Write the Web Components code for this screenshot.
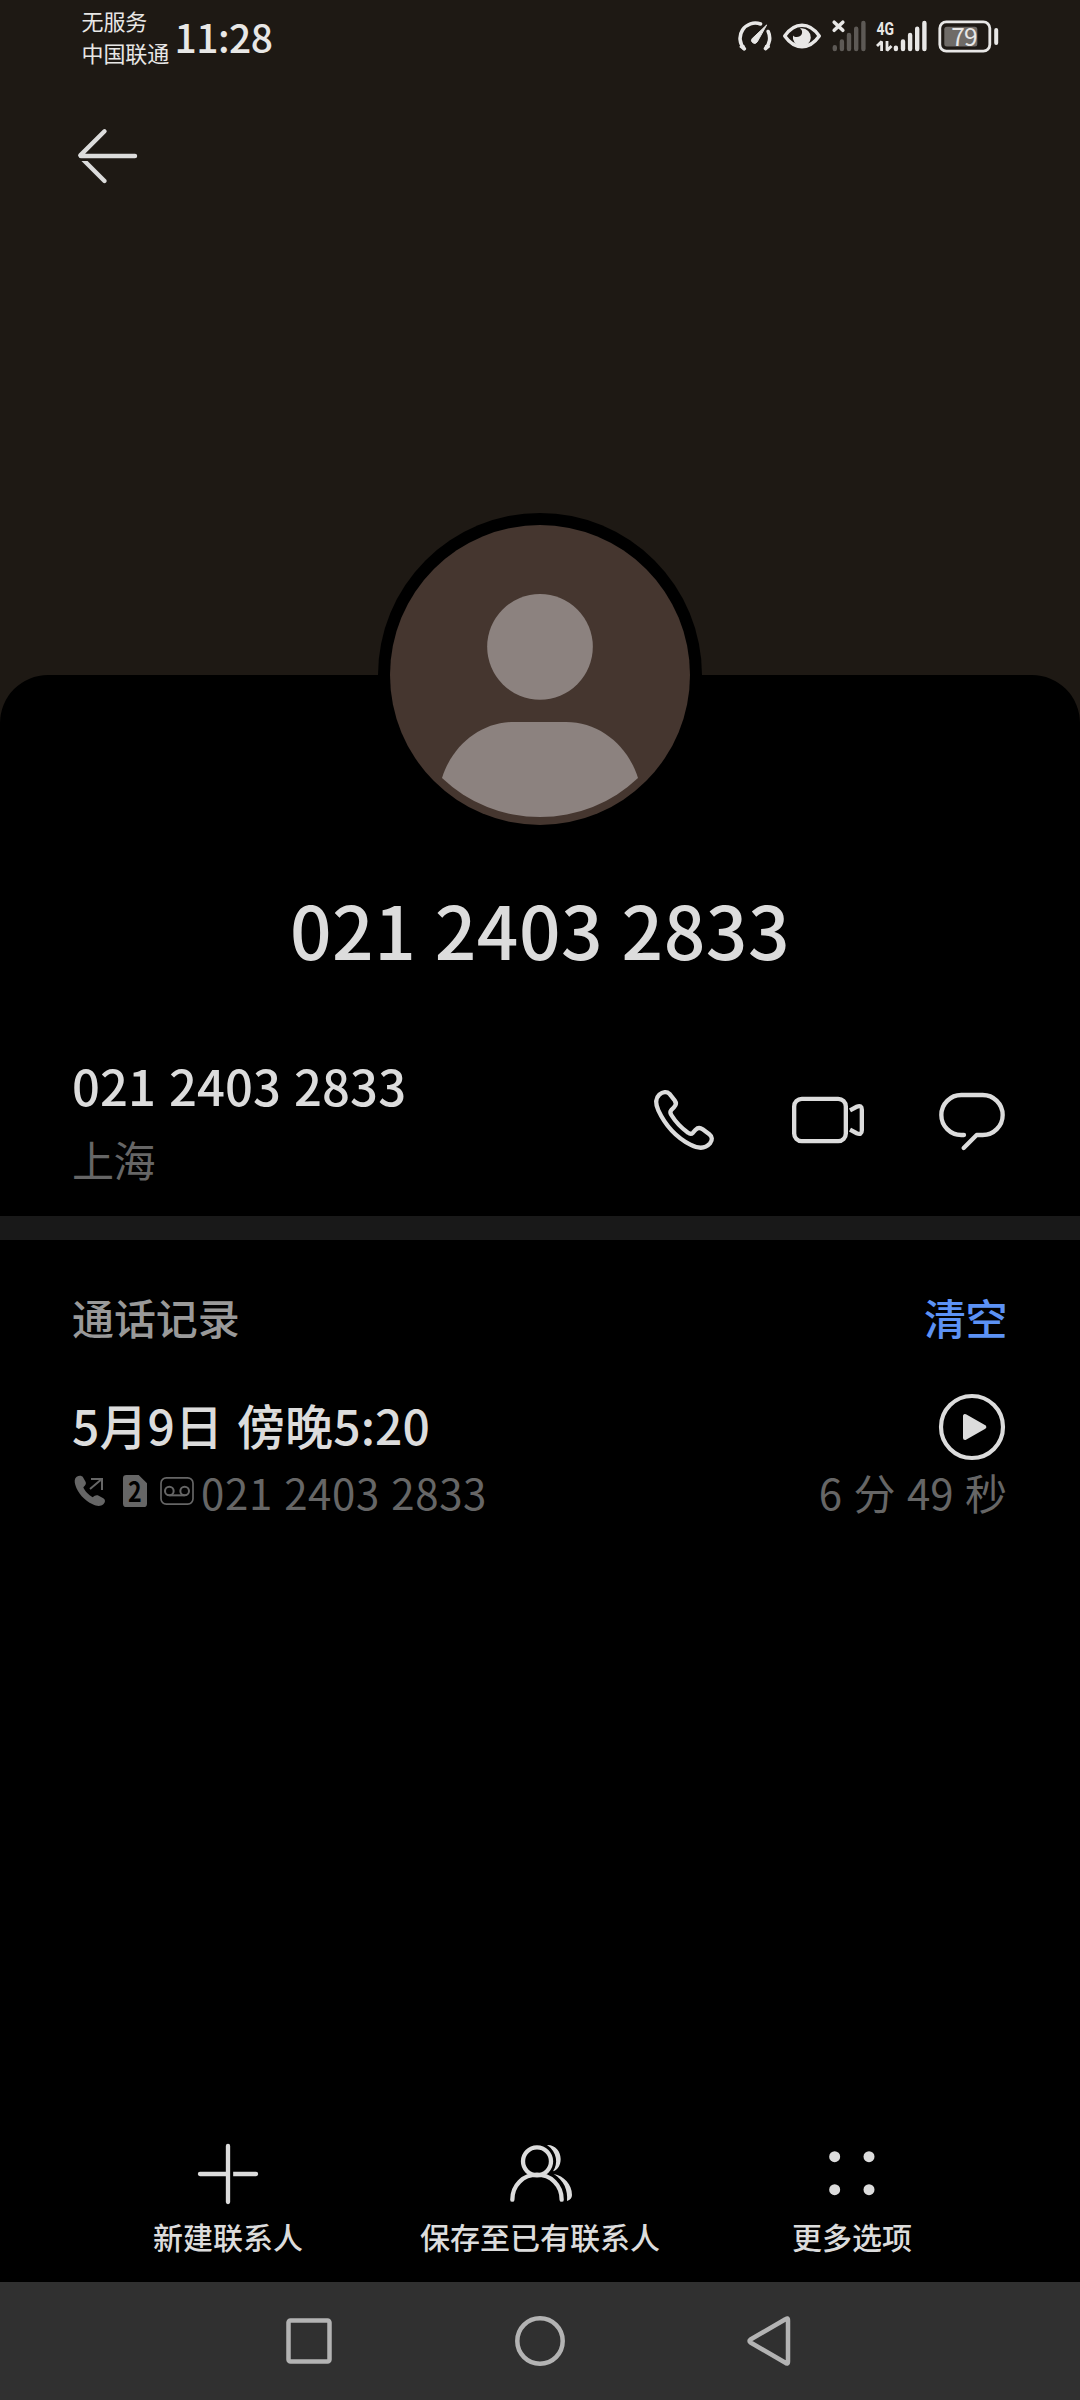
<!DOCTYPE html>
<html lang="zh-CN">
<head>
<meta charset="UTF-8">
<title>联系人</title>
<style>
    body {
        margin: 0;
        background: #000;
        color: #dcdcdc;
        font-family: "Noto Sans CJK SC", sans-serif;
    }
</style>
</head>
<body>
<phone-screen>
    <status-bar slot="status" time="11:28"></status-bar>
    <contact-avatar></contact-avatar>
    <contact-name>021 2403 2833</contact-name>
    <number-row>021 2403 2833<span slot="place">上海</span></number-row>
    <call-log>
        <span slot="title">通话记录</span>
        <span slot="clear">清空</span>
        <call-item duration="6 分 49 秒" number="021 2403 2833">5月9日 傍晚5:20</call-item>
    </call-log>
    <tool-bar slot="tools">
        <tool-button icon="add">新建联系人</tool-button>
        <tool-button icon="people">保存至已有联系人</tool-button>
        <tool-button icon="more">更多选项</tool-button>
    </tool-bar>
    <nav-bar slot="nav"></nav-bar>
</phone-screen>

<script>
class BaseElement extends HTMLElement {
    constructor() {
        super();
        this.attachShadow({ mode: 'open' });
    }

    connectedCallback() {
        this.shadowRoot.innerHTML = this.template();
    }
}

class PhoneScreen extends BaseElement {
    template() {
        return `
            <style>
                :host {
                    display: flex;
                    flex-direction: column;
                    width: 1080px;
                    height: 2400px;
                    overflow: hidden;
                    background: #1e1914;
                }
                header {
                    box-sizing: border-box;
                    height: 603px;
                    padding: 54px 0 0 72px;
                }
                header svg { display: block; }
                main {
                    flex: 1;
                    display: flex;
                    flex-direction: column;
                    background: #000;
                    border-radius: 48px 48px 0 0;
                }
                .space { flex: 1; }
            </style>
            <slot name="status"></slot>
            <header>
                <svg width="72" height="60" viewBox="72 126 72 60" fill="none" stroke="#dcdcdc" stroke-width="4.4" stroke-linecap="round" stroke-linejoin="round">
                    <path d="M104.5 181 L81 157.5"/>
                    <path d="M76 156H104" stroke="#1e1914" stroke-width="10" stroke-linecap="butt"/>
                    <path d="M104.5 131.3L80.3 155.4M80.8 156H135"/>
                </svg>
            </header>
            <main>
                <slot></slot>
                <div class="space"></div>
                <slot name="tools"></slot>
            </main>
            <slot name="nav"></slot>
        `;
    }
}

class StatusBar extends BaseElement {
    template() {
        return `
            <style>
                :host {
                    display: flex;
                    height: 72px;
                    color: #e8e7e6;
                }
                .carrier {
                    width: 93px;
                    padding: 5px 0 0 81.5px;
                    font-size: 22px;
                    line-height: 31.5px;
                    letter-spacing: -0.1px;
                    white-space: nowrap;
                }
                .time {
                    flex: 1;
                    padding-top: 6px;
                    font-size: 39px;
                    font-weight: 500;
                    line-height: 60px;
                    letter-spacing: -0.5px;
                }
                svg { display: block; margin-right: 72px; }
            </style>
            <div class="carrier">无服务<br>中国联通</div>
            <div class="time">${this.getAttribute('time')}</div>
            <svg width="276" height="72" viewBox="732 0 276 72" fill="none" stroke="#e8e7e6" stroke-linecap="round" stroke-linejoin="round">
                <!-- speed gauge -->
                <path d="M744.3 48.8A15.2 15.2 0 0 1 760.5 24M768.2 31.5A15.2 15.2 0 0 1 765.5 48.5" stroke-width="3.6"/>
                <path d="M740.5 46.8L743.6 49.3V46M769 46.8L765.9 49.3V46" stroke-width="2"/>
                <path d="M766.4 25.2L752.2 38.6A3 3 0 0 0 757 42.2Z" fill="#e8e7e6" stroke-width="1"/>
                <!-- eye comfort -->
                <path d="M784.7 36C790 28.5 796 25.3 802 25.3S814 28.5 819.3 36C814 43.5 808 46.7 802 46.7S790 43.5 784.7 36Z" stroke-width="3.4"/>
                <path d="M801.5 28.3A9 9 0 1 1 793 35.5C795 38 800.5 37.5 801.8 34C802.6 31.5 802 29.5 799.8 28.4Z" fill="#e8e7e6" stroke="none"/>
                <!-- sim 1, no service -->
                <path d="M834.2 22.2L842.8 30.3M842.8 22.2L834.2 30.3" stroke-width="3.6"/>
                <path d="M834.8 47.3V49M841.9 41.5V49M849 35V49M856.2 28.8V49M863.4 23V49" stroke="#5d5955" stroke-width="4.4"/>
                <!-- sim 2 -->
                <text x="876.5" y="34.6" font-family="Roboto" font-size="18.5" font-weight="700" textLength="17.5" lengthAdjust="spacingAndGlyphs" fill="#e8e7e6" stroke="none">4G</text>
                <path d="M877 46L881.6 41.5V51M887 41V50.5L891.5 46" stroke-width="2.8" stroke-linecap="butt" stroke-linejoin="bevel"/>
                <path d="M895.9 47.8V49M903 41.5V49M910.1 35V49M917.2 28.8V49M924.4 23V49" stroke-width="4.4"/>
                <!-- battery -->
                <rect x="939.8" y="21.8" width="50" height="29.3" rx="6.5" stroke-width="2.8"/>
                <rect x="944.3" y="26.7" width="33" height="19.7" rx="2.5" fill="#6f6b67" stroke="none"/>
                <path d="M996.2 30V43" stroke-width="4"/>
                <text x="951.2" y="46" font-family="Noto Sans CJK SC" font-size="24.5" textLength="26.5" fill="#e8e7e6" stroke="none">79</text>
            </svg>
        `;
    }
}

class ContactAvatar extends BaseElement {
    template() {
        return `
            <style>
                :host {
                    display: block;
                    width: 324px;
                    height: 324px;
                    margin: -162px auto 0;
                }
                svg { display: block; }
            </style>
            <svg width="324" height="324" viewBox="54 69 972 972">
                <circle cx="540" cy="555" r="486" fill="#000"/>
                <circle cx="540" cy="555" r="450" fill="#45362f"/>
                <g fill="#8c827f">
                    <circle cx="540" cy="470.5" r="158.5"/>
                    <path d="M246 864C276 768 360 696 462 696H618C720 696 804 768 834 864A427 427 0 0 1 246 864Z"/>
                </g>
            </svg>
        `;
    }
}

class ContactName extends BaseElement {
    template() {
        return `
            <style>
                :host {
                    display: block;
                    margin-top: 46px;
                    text-align: center;
                    font-size: 73px;
                    font-weight: 500;
                    line-height: 90px;
                    letter-spacing: 0.5px;
                    word-spacing: 1.5px;
                }
            </style>
            <slot></slot>
        `;
    }
}

class NumberRow extends BaseElement {
    template() {
        return `
            <style>
                :host {
                    display: flex;
                    box-sizing: border-box;
                    height: 267px;
                    padding: 82px 72px 0;
                    border-bottom: 24px solid #191919;
                    line-height: 60px;
                }
                .text { flex: 1; }
                .number {
                    font-size: 49px;
                    font-weight: 500;
                    letter-spacing: 0.1px;
                    word-spacing: 1.8px;
                }
                .place {
                    margin-top: 14px;
                    font-size: 42px;
                    letter-spacing: -0.5px;
                    color: #666;
                }
                .actions {
                    display: flex;
                    gap: 72px;
                    padding-top: 29px;
                }
            </style>
            <div class="text">
                <div class="number"><slot></slot></div>
                <div class="place"><slot name="place"></slot></div>
            </div>
            <div class="actions">
                <svg width="72" height="72" viewBox="84 72 216 216" fill="none" stroke="#dcdcdc" stroke-width="13" stroke-linejoin="round">
                    <path d="M118 104C128 95 141 94 148 101L164 121C170 129 168 136 162 142L154 150C150 154 151 160 154 165C167 186 183 203 204 218C209 222 215 222 219 218L227 209C233 203 241 203 248 208L268 223C277 230 278 240 270 250C255 267 234 266 211 254C171 233 136 196 115 151C107 133 106 115 118 104Z"/>
                </svg>
                <svg width="72" height="72" viewBox="516 72 216 216" fill="none" stroke="#dcdcdc" stroke-width="13">
                    <rect x="522.5" y="116.5" width="155" height="127" rx="23"/>
                    <path d="M690 151L710 140.5Q725.5 134 725.5 149V211Q725.5 226 710 219.5L690 209"/>
                </svg>
                <svg width="72" height="72" viewBox="948 72 216 216" fill="none" stroke="#dcdcdc" stroke-width="13" stroke-linecap="round" stroke-linejoin="round">
                    <path d="M1032 225H1024A60 60 0 0 1 1024 105H1088A60 60 0 0 1 1088 225H1070L1031 264"/>
                </svg>
            </div>
        `;
    }
}

class CallLog extends BaseElement {
    template() {
        return `
            <style>
                :host {
                    display: block;
                    padding: 47px 72px 0;
                }
                .head {
                    display: flex;
                    justify-content: space-between;
                    margin-bottom: 47px;
                    font-size: 42px;
                    font-weight: 500;
                    line-height: 60px;
                    letter-spacing: -0.1px;
                    color: #999;
                }
                .clear {
                    margin-right: 1px;
                    letter-spacing: -0.5px;
                    color: #5c92f5;
                }
            </style>
            <div class="head">
                <slot name="title"></slot>
                <div class="clear"><slot name="clear"></slot></div>
            </div>
            <slot></slot>
        `;
    }
}

class CallItem extends BaseElement {
    template() {
        return `
            <style>
                :host { display: block; }
                .row {
                    display: flex;
                    justify-content: space-between;
                    height: 68px;
                    line-height: 60px;
                }
                .date {
                    font-size: 48px;
                    font-weight: 500;
                    letter-spacing: 0.1px;
                    word-spacing: 3px;
                }
                .play { margin-top: -3px; }
                .detail {
                    color: #666;
                    font-size: 42px;
                }
                .number {
                    display: flex;
                    letter-spacing: 0.65px;
                    word-spacing: 1.2px;
                }
                .duration {
                    margin-right: 1px;
                    word-spacing: 2px;
                }
                svg { display: block; }
            </style>
            <div class="row">
                <div class="date"><slot></slot></div>
                <svg class="play" width="72" height="72" viewBox="438 333 216 216">
                    <circle cx="546" cy="441" r="93" fill="none" stroke="#dcdcdc" stroke-width="12.5"/>
                    <path d="M525 408V474L583 441Z" fill="#dcdcdc" stroke="#dcdcdc" stroke-width="12" stroke-linejoin="round"/>
                </svg>
            </div>
            <div class="row detail">
                <div class="number">
                    <svg width="129" height="60" viewBox="36 546 387 180" fill="#666">
                        <!-- outgoing call -->
                        <path d="M50 590C58 586 66 587 69 592L77 606C79 611 77 615 70 622C74 633 86 645 98 652C104 646 110 644 116 647L130 655C137 660 136 667 130 673C122 680 110 679 98 673C73 661 53 639 46 615C43 604 43 595 50 590Z"/>
                        <path d="M90 627L122 600M93 597H126V630" fill="none" stroke="#666" stroke-width="6"/>
                        <!-- sim slot -->
                        <path d="M199 585H236L261 610V671Q261 681 251 681H199Q189 681 189 671V595Q189 585 199 585Z"/>
                        <text x="204" y="666" font-family="Noto Sans CJK SC" font-size="84" font-weight="700" textLength="41" lengthAdjust="spacingAndGlyphs" letter-spacing="0" fill="#000">2</text>
                        <!-- recording -->
                        <g fill="none" stroke="#666">
                            <rect x="303" y="593.5" width="96" height="79" rx="16" stroke-width="5"/>
                            <circle cx="328" cy="633" r="13" stroke-width="6"/>
                            <circle cx="374" cy="633" r="13" stroke-width="6"/>
                            <path d="M328 646H374" stroke-width="6"/>
                        </g>
                    </svg>
                    ${this.getAttribute('number')}
                </div>
                <div class="duration">${this.getAttribute('duration')}</div>
            </div>
        `;
    }
}

class ToolBar extends BaseElement {
    template() {
        return `
            <style>
                :host {
                    display: grid;
                    grid-template-columns: repeat(3, 1fr);
                    height: 144px;
                    padding: 0 72px;
                }
            </style>
            <slot></slot>
        `;
    }
}

const toolIcons = {
    add: `
        <svg width="72" height="72" viewBox="186 54 216 216" fill="none" stroke="#dcdcdc" stroke-width="13" stroke-linecap="round">
            <path d="M210 162H378"/>
            <path d="M304 150V174" stroke="#000" stroke-width="11" stroke-linecap="butt"/>
            <path d="M294 78V246"/>
        </svg>`,
    people: `
        <svg width="72" height="72" viewBox="12 54 216 216" fill="none" stroke="#dcdcdc" stroke-width="13" stroke-linecap="round">
            <circle cx="111" cy="124" r="42"/>
            <path d="M37 239C37 195 70 164 111 164S185 195 185 239"/>
            <path d="M141 75C166 74 182 94 182 117C182 135 173 150 159 154C175 131 172 96 141 75ZM161 162C192 168 216 193 216 225C216 234 211 240 201 243C204 211 192 181 161 162Z" fill="#dcdcdc" stroke="none"/>
        </svg>`,
    more: `
        <svg width="72" height="72" viewBox="948 54 216 216" fill="#dcdcdc">
            <circle cx="1004" cy="110" r="16.5"/>
            <circle cx="1107" cy="110" r="16.5"/>
            <circle cx="1004" cy="209" r="16.5"/>
            <circle cx="1107" cy="209" r="16.5"/>
        </svg>`
};

class ToolButton extends BaseElement {
    template() {
        return `
            <style>
                :host {
                    display: flex;
                    flex-direction: column;
                    align-items: center;
                    gap: 6px;
                    font-size: 30px;
                    font-weight: 500;
                    line-height: 40px;
                    white-space: nowrap;
                }
            </style>
            ${toolIcons[this.getAttribute('icon')]}
            <div><slot></slot></div>
        `;
    }
}

class NavBar extends BaseElement {
    template() {
        return `
            <style>
                :host {
                    display: flex;
                    justify-content: center;
                    align-items: center;
                    gap: 159px;
                    height: 118px;
                    background: #303030;
                }
            </style>
            <svg width="72" height="72" viewBox="0 0 72 72" fill="none" stroke="#b3b3b3" stroke-width="4.5">
                <rect x="15.5" y="15.5" width="41" height="41" rx="2"/>
            </svg>
            <svg width="72" height="72" viewBox="0 0 72 72" fill="none" stroke="#b3b3b3" stroke-width="4.5">
                <circle cx="36" cy="36" r="22.7"/>
            </svg>
            <svg width="72" height="72" viewBox="0 0 72 72" fill="none" stroke="#b3b3b3" stroke-width="4.5" stroke-linejoin="round">
                <path d="M53 15.5Q53 12 50 14.5L15.5 34.5Q13.5 36 15.5 37.5L50 57.5Q53 60 53 56.5Z"/>
            </svg>
        `;
    }
}

customElements.define('phone-screen', PhoneScreen);
customElements.define('status-bar', StatusBar);
customElements.define('contact-avatar', ContactAvatar);
customElements.define('contact-name', ContactName);
customElements.define('number-row', NumberRow);
customElements.define('call-log', CallLog);
customElements.define('call-item', CallItem);
customElements.define('tool-bar', ToolBar);
customElements.define('tool-button', ToolButton);
customElements.define('nav-bar', NavBar);
</script>
</body>
</html>
